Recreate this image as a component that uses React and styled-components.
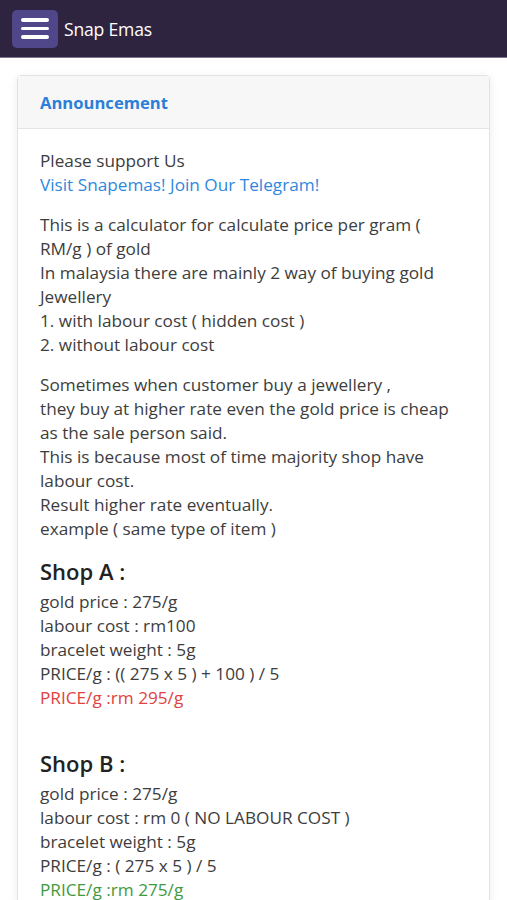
import styled, { createGlobalStyle } from "styled-components";

const GlobalStyle = createGlobalStyle`
  html, body {
    margin: 0;
    padding: 0;
    background: #ffffff;
  }
  body {
    font-family: "Open Sans", "Noto Sans", "Liberation Sans", sans-serif;
    color: #3d3d3d;
  }
`;

const NavBar = styled.header`
  height: 58px;
  background: #2f2440;
  border-bottom: 1px solid #7b7590;
  box-sizing: border-box;
  display: flex;
  align-items: center;
  padding: 0 12px;
  gap: 6px;
`;

const MenuButton = styled.button`
  width: 46px;
  height: 38px;
  border: none;
  border-radius: 5px;
  background: #50468a;
  display: flex;
  flex-direction: column;
  justify-content: center;
  align-items: center;
  gap: 5px;
  padding: 0;
  & > span {
    display: block;
    width: 28px;
    height: 3.5px;
    border-radius: 2px;
    background: #ffffff;
  }
`;

const Brand = styled.div`
  color: #ffffff;
  font-size: 17.6px;
  letter-spacing: -0.2px;
`;

const Page = styled.main`
  padding: 17px 17px 0;
`;

const Card = styled.section`
  border: 1px solid #e3e3e3;
  border-radius: 4px;
  box-shadow: 0 2px 10px rgba(0, 0, 0, 0.08);
  background: #ffffff;
`;

const CardHeader = styled.div`
  height: 52px;
  background: #f7f7f7;
  border-bottom: 1px solid #e4e4e4;
  display: flex;
  align-items: center;
  padding: 0 22px;
  font-weight: 700;
  font-size: 16.6px;
  color: #2b7fd8;
`;

const CardBody = styled.div`
  padding: 20px 34px 0 22px;
  font-size: 17.2px;
  line-height: 24px;
`;

const Para = styled.p`
  margin: 0 0 ${(p) => (p.$last ? "0" : "16px")};
`;

const Link = styled.span`
  color: #2f88e0;
`;

const ShopTitle = styled.h3`
  margin: ${(p) => (p.$spaced ? "39px" : "16px")} 0 5px;
  font-size: 22px;
  line-height: 28px;
  font-weight: 600;
  color: #222222;
`;

const Line = styled.div`
  color: ${(p) => p.$color || "inherit"};
`;

const shops = [
  {
    name: "Shop A :",
    lines: [
      "gold price : 275/g",
      "labour cost : rm100",
      "bracelet weight : 5g",
      "PRICE/g : (( 275 x 5 ) + 100 ) / 5",
    ],
    result: "PRICE/g :rm 295/g",
    color: "#e0423f",
  },
  {
    name: "Shop B :",
    lines: [
      "gold price : 275/g",
      "labour cost : rm 0 ( NO LABOUR COST )",
      "bracelet weight : 5g",
      "PRICE/g : ( 275 x 5 ) / 5",
    ],
    result: "PRICE/g :rm 275/g",
    color: "#3f9a3f",
  },
];

export default function App() {
  return (
    <>
      <GlobalStyle />
      <NavBar>
        <MenuButton aria-label="menu">
          <span />
          <span />
          <span />
        </MenuButton>
        <Brand>Snap Emas</Brand>
      </NavBar>
      <Page>
        <Card>
          <CardHeader>Announcement</CardHeader>
          <CardBody>
            <Para>
              Please support Us
              <br />
              <Link>Visit Snapemas! Join Our Telegram!</Link>
            </Para>
            <Para>
              This is a calculator for calculate price per gram ( RM/g ) of gold
              <br />
              In malaysia there are mainly 2 way of buying gold Jewellery
              <br />
              1. with labour cost ( hidden cost )
              <br />
              2. without labour cost
            </Para>
            <Para $last>
              Sometimes when customer buy a jewellery ,
              <br />
              they buy at higher rate even the gold price is cheap as the sale person said.
              <br />
              This is because most of time majority shop have labour cost.
              <br />
              Result higher rate eventually.
              <br />
              example ( same type of item )
            </Para>
            {shops.map((s, i) => (
              <div key={s.name}>
                <ShopTitle $spaced={i > 0}>{s.name}</ShopTitle>
                {s.lines.map((l) => (
                  <Line key={l}>{l}</Line>
                ))}
                <Line $color={s.color}>{s.result}</Line>
              </div>
            ))}
          </CardBody>
        </Card>
      </Page>
    </>
  );
}
